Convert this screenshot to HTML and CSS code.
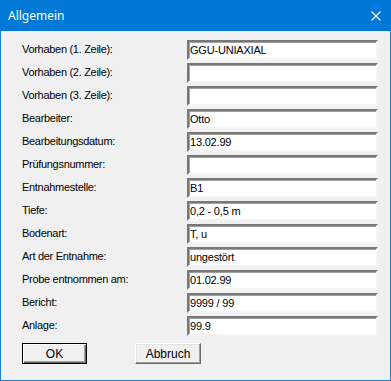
FILE: index.html
```
<!DOCTYPE html>
<html lang="de">
<head>
    <meta charset="UTF-8">
    <title>Allgemein</title>
    <link rel="stylesheet" href="styles.css">
</head>
<body>
    <div class="dialog">
        <div class="titlebar">
            <span class="title">Allgemein</span>
            <svg class="close" width="10" height="10" viewBox="0 0 10 10">
                <path d="M0.5 0.5 L9.5 9.5 M9.5 0.5 L0.5 9.5" stroke="#fff" stroke-width="1.1" fill="none"/>
            </svg>
        </div>
        <div class="content">
            <div class="form">
                <label>Vorhaben (1. Zeile):</label>
                <input type="text" value="GGU-UNIAXIAL">

                <label>Vorhaben (2. Zeile):</label>
                <input type="text" value="">

                <label>Vorhaben (3. Zeile):</label>
                <input type="text" value="">

                <label>Bearbeiter:</label>
                <input type="text" value="Otto">

                <label>Bearbeitungsdatum:</label>
                <input type="text" value="13.02.99">

                <label>Prüfungsnummer:</label>
                <input type="text" value="">

                <label>Entnahmestelle:</label>
                <input type="text" value="B1">

                <label>Tiefe:</label>
                <input type="text" value="0,2 - 0,5 m">

                <label>Bodenart:</label>
                <input type="text" value="T, u">

                <label>Art der Entnahme:</label>
                <input type="text" value="ungestört">

                <label>Probe entnommen am:</label>
                <input type="text" value="01.02.99">

                <label>Bericht:</label>
                <input type="text" value="9999 / 99">

                <label>Anlage:</label>
                <input type="text" value="99.9">
            </div>
            <div class="buttons">
                <button class="btn default">OK</button>
                <button class="btn">Abbruch</button>
            </div>
        </div>
    </div>
</body>
</html>
```

FILE: styles.css
```
body {
    margin: 0;
    background: #f0f0f0;
}
.dialog {
    width: 391px;
    height: 381px;
    box-sizing: border-box;
    border: 1px solid #1a7fd6;
    border-top: none;
    background: #f0f0f0;
    font-family: "Liberation Sans", Arial, sans-serif;
    font-size: 11px;
    color: #000;
}
.titlebar {
    height: 31px;
    background: #0078d7;
    display: flex;
    align-items: center;
    justify-content: space-between;
    padding: 0 10px 0 8px;
    margin: 0 -1px;
}
.title {
    color: #fff;
    font-family: "Noto Sans", "Open Sans", sans-serif;
    font-size: 12px;
    padding-bottom: 1px;
}
.close {
    display: block;
}
.content {
    padding: 9px 12px 0 21px;
}
.form {
    display: grid;
    grid-template-columns: 165px 191px;
    grid-auto-rows: 20px;
    row-gap: 3px;
}
.form label {
    line-height: 16px;
    padding-top: 1px;
    letter-spacing: -0.3px;
}
.form input {
    box-sizing: border-box;
    width: 191px;
    height: 20px;
    margin: 0;
    padding: 0 2px 0 1px;
    font: inherit;
    letter-spacing: -0.2px;
    color: #000;
    background: #fff;
    border-style: solid;
    border-width: 2px;
    border-color: #787878 #f4f4f4 #f4f4f4 #787878;
    box-shadow: inset 1px 1px 0 #a0a0a0;
    outline: none;
}
.buttons {
    display: flex;
    gap: 48px;
    margin-top: 7px;
}
.btn {
    box-sizing: border-box;
    width: 65px;
    height: 21px;
    margin: 0;
    padding: 0;
    font: inherit;
    font-size: 12px;
    color: #000;
    background: #f0f0f0;
    border: 1px solid;
    border-color: #fff #696969 #696969 #fff;
    box-shadow: inset -1px -1px 0 #a0a0a0, inset 1px 1px 0 #e3e3e3;
}
.btn + .btn {
    width: 66px;
}
.btn.default {
    border: 1px solid #000;
    box-shadow: inset 1px 1px 0 #fff, inset -1px -1px 0 #696969, inset -2px -2px 0 #a0a0a0;
}
```
